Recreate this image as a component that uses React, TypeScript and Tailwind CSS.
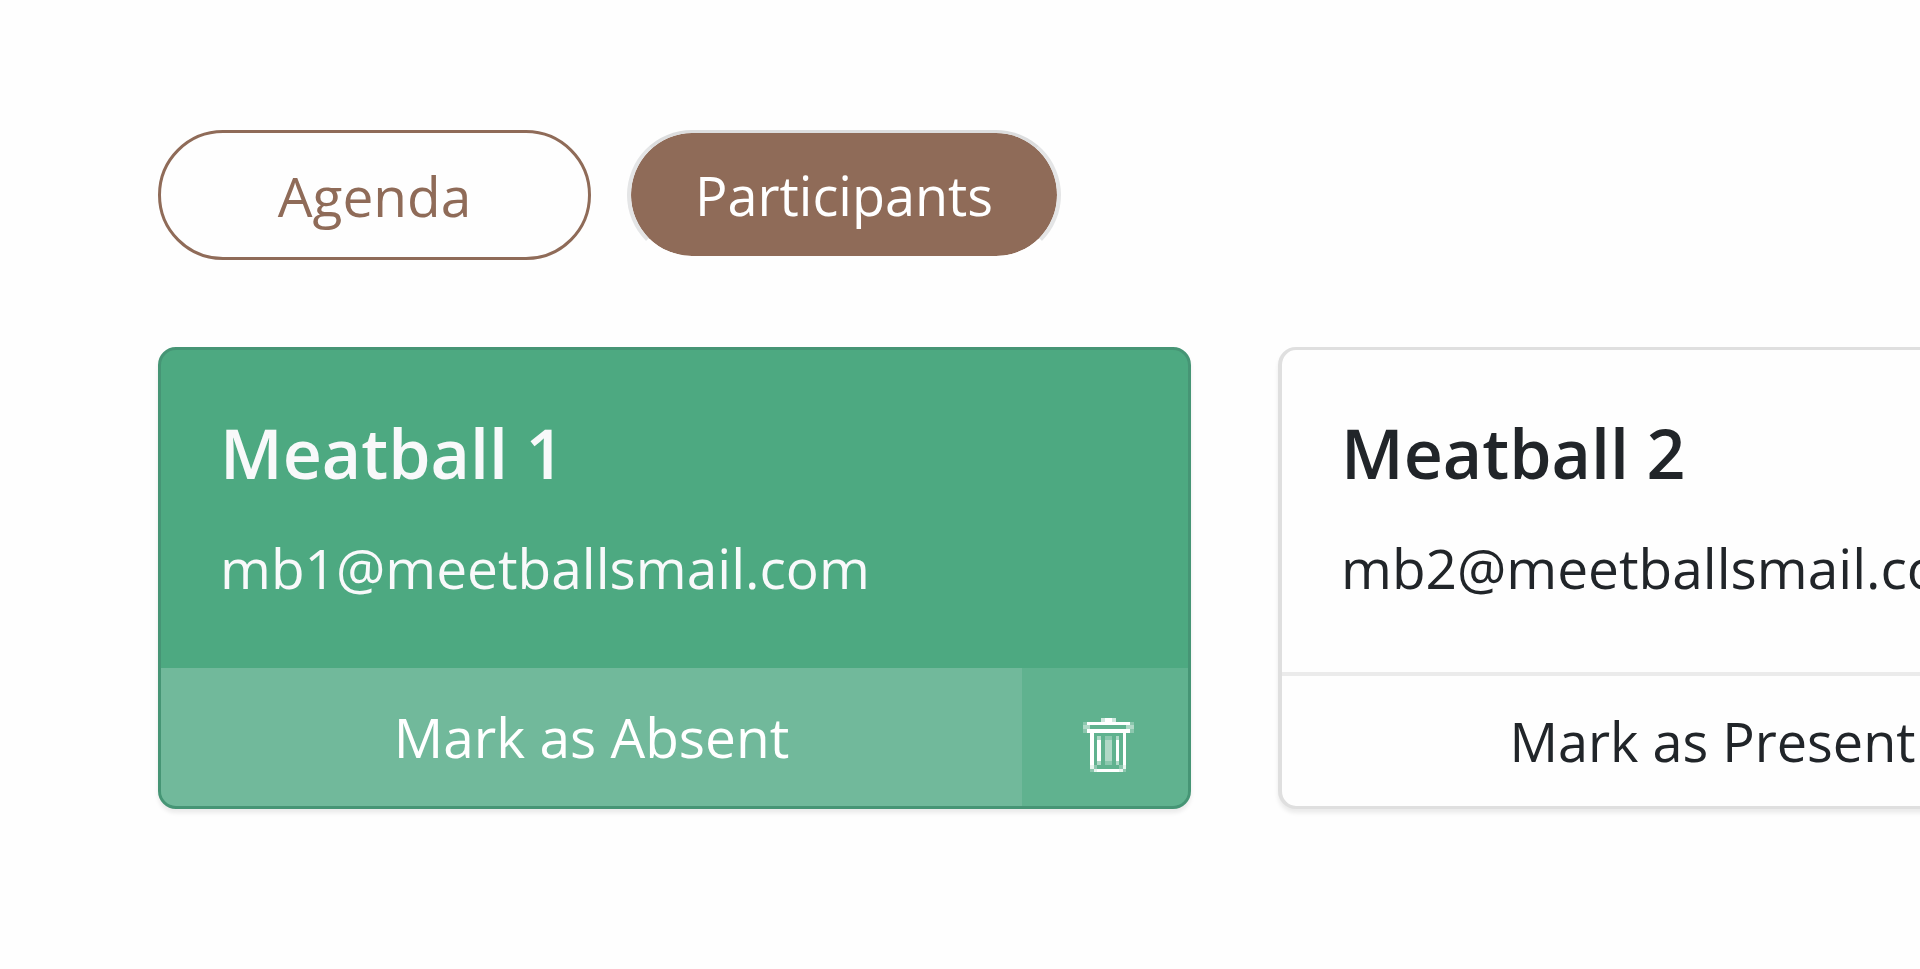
type Participant = { name: string; email: string; present: boolean };

const participants: Participant[] = [
  { name: "Meatball 1", email: "mb1@meetballsmail.com", present: true },
  { name: "Meatball 2", email: "mb2@meetballsmail.com", present: false },
];

function TrashIcon() {
  return (
    <svg width="51" height="54" viewBox="0 0 51 54" fill="currentColor" shapeRendering="crispEdges" aria-hidden="true">
      <path d="M22 0h7v4h-7zM4 4h43v3H4zM4 11h43v4H4zM7 15h4v32H7zM40 15h3v32h-3zM14 51h22v3H14zM14 22h4v21h-4zM33 22h3v21h-3z" />
      <path opacity=".85" d="M7 47h4v4H7zM40 47h3v4h-3zM11 51h3v3h-3zM36 51h4v3h-4z" />
      <path opacity=".7" d="M18 0h4v4h-4zM29 0h4v4h-4z" />
      <path opacity=".5" d="M0 7h7v4H0zM43 7h8v4h-8zM22 22h7v21h-7zM14 18h4v4h-4zM33 18h3v4h-3zM14 43h4v4h-4zM33 43h3v4h-3z" />
      <path opacity=".28" d="M0 4h4v3H0zM47 4h4v3h-4zM0 11h4v4H0zM47 11h4v4h-4zM22 18h7v4h-7zM22 43h7v4h-7zM11 47h3v4h-3zM36 47h4v4h-4zM7 51h4v3H7zM40 51h3v3h-3z" />
    </svg>
  );
}

function ParticipantCard({ name, email, present }: Participant) {
  return (
    <article
      className={
        present
          ? "flex w-[1033px] shrink-0 flex-col overflow-hidden rounded-[18px] border-3 border-[#469575] bg-[#4da981] text-[#f8f9fa] shadow-[0_4px_4px_rgba(0,0,0,0.08)]"
          : "flex w-[1033px] shrink-0 flex-col overflow-hidden rounded-[18px] border-3 border-l-4 border-[#dfdfdf] bg-[#fefefe] text-[#212529] shadow-[0_4px_4px_rgba(0,0,0,0.08)]"
      }
    >
      <div className="flex grow flex-col px-[59px] pt-[59px] pb-[56px]">
        <h2 className="text-[68px] leading-[88px] font-semibold">{name}</h2>
        <p className="mt-[27px] text-[55px] leading-[88px]">{email}</p>
      </div>
      <div className={present ? "flex h-[138px]" : "flex h-[134px] border-t-4 border-[#ebebeb]"}>
        <button
          type="button"
          className={present ? "w-[861px] bg-[#71b99b] text-[55px] text-white" : "w-[861px] text-[54px]"}
        >
          {present ? "Mark as Absent" : "Mark as Present"}
        </button>
        <button
          type="button"
          aria-label={`Remove ${name}`}
          className={
            present
              ? "flex flex-1 items-center justify-center bg-[#60b28f] pt-[16px] pl-[6px] text-white"
              : "flex flex-1 items-center justify-center pt-[16px]"
          }
        >
          <TrashIcon />
        </button>
      </div>
    </article>
  );
}

export default function App() {
  return (
    <main className="min-h-screen overflow-hidden bg-[#fefefe] pt-[130px] pl-[158px] font-['Open_Sans','Noto_Sans',sans-serif]">
      <nav className="flex gap-9">
        <button type="button" className="h-[130px] w-[433px] rounded-full border-3 border-[#8f6b58] pt-px text-[55px] leading-[80px] text-[#8f6b58]">
          Agenda
        </button>
        <button type="button" className="h-[130px] w-[434px] rounded-full border-x-4 border-t-3 border-b-4 border-x-[#e4e5e6] border-t-[#dcddde] border-b-[#fefefe] bg-[#8f6b58] bg-clip-padding pt-px text-[54px] leading-[80px] text-white">
          Participants
        </button>
      </nav>
      <section className="mt-[87px] flex gap-[87px]">
        {participants.map((p) => (
          <ParticipantCard key={p.email} {...p} />
        ))}
      </section>
    </main>
  );
}
